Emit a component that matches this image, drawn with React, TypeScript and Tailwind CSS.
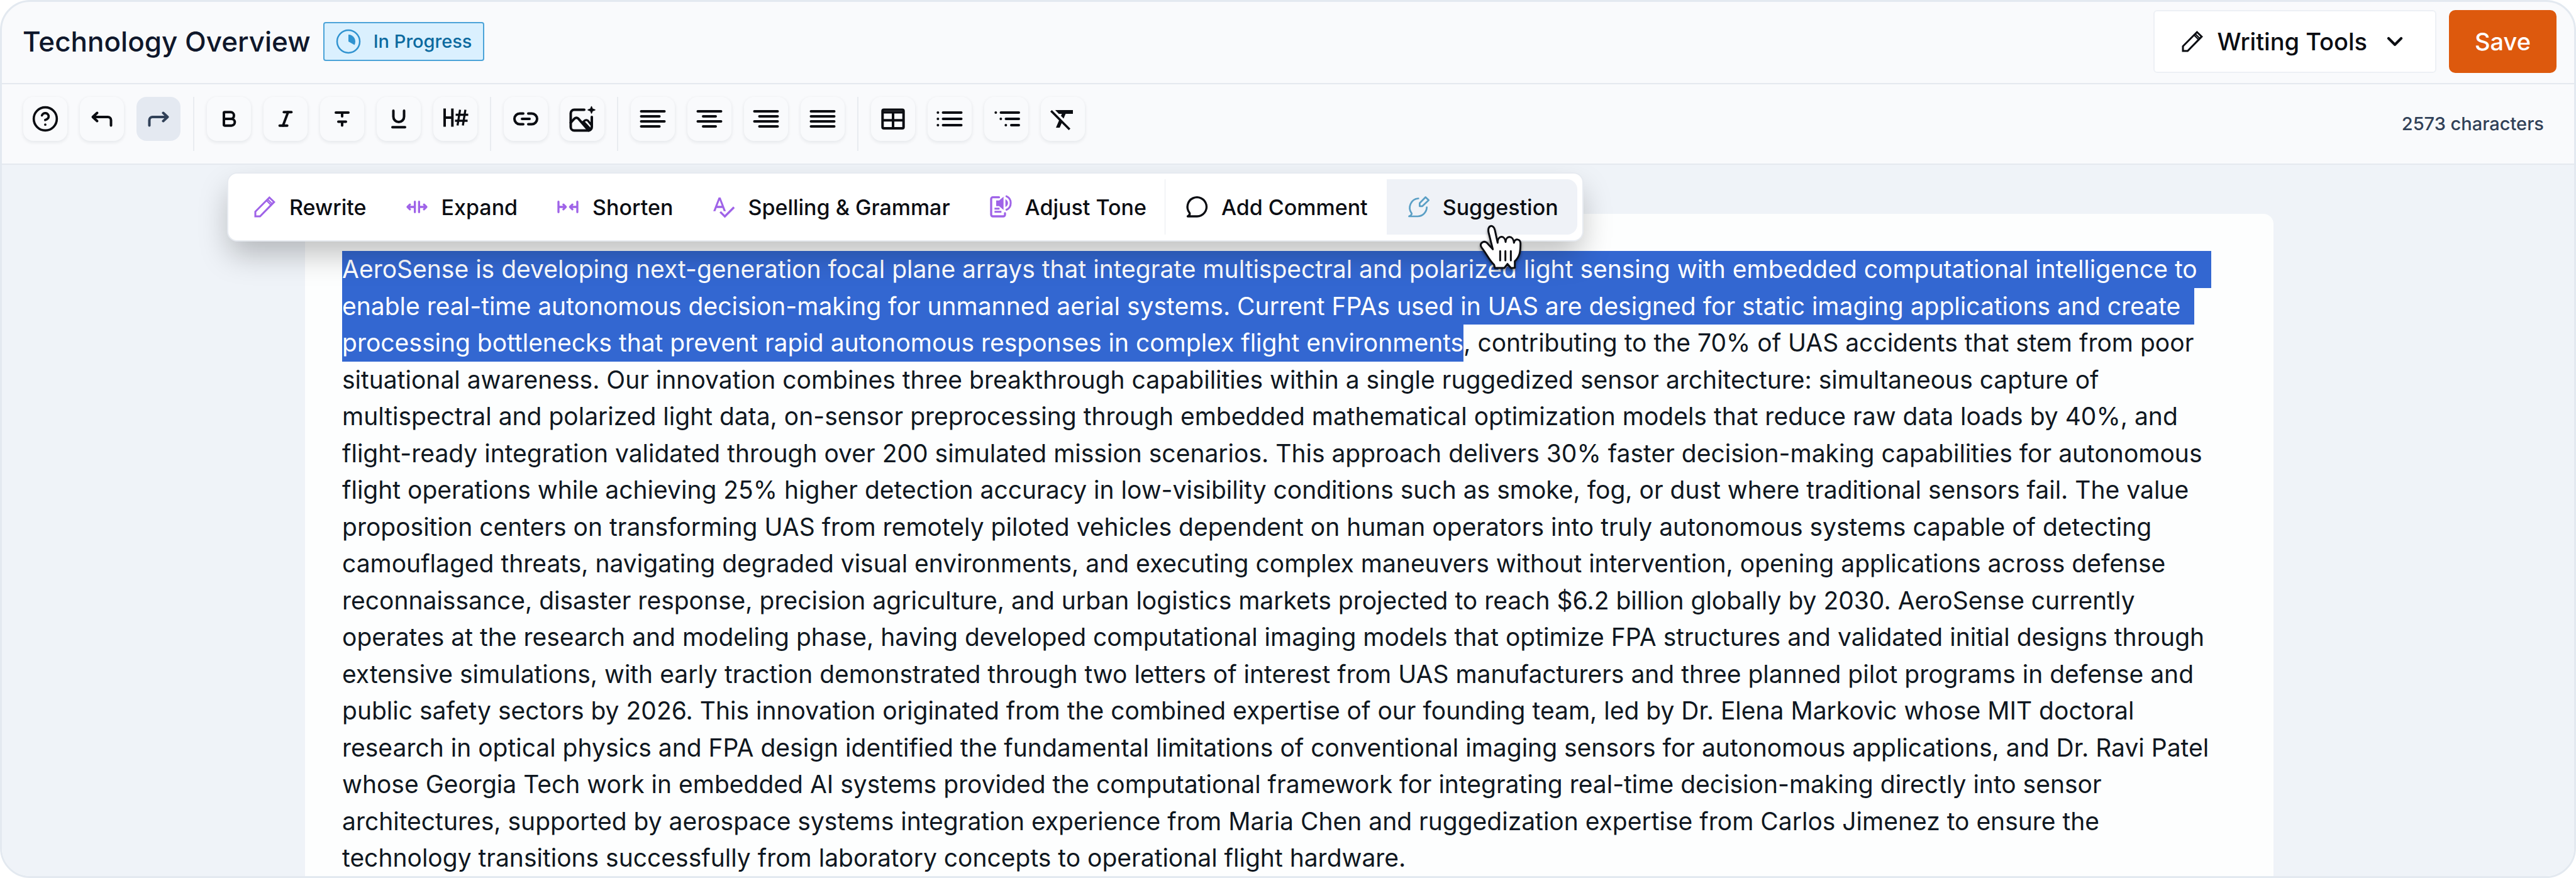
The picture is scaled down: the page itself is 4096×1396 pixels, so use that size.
import type { ReactNode } from 'react';
import { Bold, Italic, CircleQuestionMark, ChevronDown } from 'lucide-react';
import { MdFormatClear, MdSpellcheck } from 'react-icons/md';

interface IconProps {
  children: ReactNode;
  className?: string;
}

// 48px toolbar icon, one unit per pixel
function ToolIcon({ children, className = '' }: IconProps) {
  return (
    <svg
      viewBox="0 0 48 48"
      fill="none"
      stroke="currentColor"
      strokeWidth="4"
      strokeLinecap="round"
      strokeLinejoin="round"
      className={`size-12 ${className}`}
      aria-hidden="true"
    >
      {children}
    </svg>
  );
}

// 40px icon for the menus
function MenuIcon({ children, className = '' }: IconProps) {
  return (
    <svg
      viewBox="0 0 24 24"
      fill="none"
      stroke="currentColor"
      strokeWidth="1.6"
      strokeLinecap="round"
      strokeLinejoin="round"
      className={`size-10 shrink-0 ${className}`}
      aria-hidden="true"
    >
      {children}
    </svg>
  );
}

const PencilIcon = ({ className }: { className?: string }) => (
  <MenuIcon className={className}>
    <path strokeLinejoin="miter" strokeWidth="1.8" d="M3 21v-4.5L16.4 3l4.5 4.3L7.5 21z" />
    <path d="M13.6 5.8l4.5 4.5M15.2 5.2l3.4 3.4" strokeWidth="1.3" />
  </MenuIcon>
);

const toolGroups = [
  [
    { label: 'Help', icon: <CircleQuestionMark className="size-11" strokeWidth={2} /> },
    { label: 'Undo', icon: <ToolIcon><path d="M38.5 34.5V26a5 5 0 0 0-5-5H10M16.5 14.5L9.5 21l7 6.5" /></ToolIcon> },
    { label: 'Redo', active: true, icon: <ToolIcon><path d="M9.5 34.5V26a5 5 0 0 1 5-5H38M31.5 14.5l7 6.5-7 6.5" /></ToolIcon> },
  ],
  [
    { label: 'Bold', icon: <Bold className="size-8" strokeWidth={3} /> },
    { label: 'Italic', icon: <Italic className="size-8" strokeWidth={3} /> },
    { label: 'Strikethrough', icon: <ToolIcon><path d="M14 14h20M24 14v6M18 28.5h12M24 28.5V34.5" /></ToolIcon> },
    { label: 'Underline', icon: <ToolIcon><path d="M15.5 11v9.5a8.5 8.5 0 0 0 17 0V11M14 37.3h20" /></ToolIcon> },
    {
      label: 'Heading',
      icon: (
        <ToolIcon>
          <g strokeLinecap="butt">
            <path d="M7 7.5v29M19.3 7.5v29M7 22h12.3" />
            <path strokeWidth="3.4" d="M31.5 9.5l-4 25M40 9.5l-4 25M24.5 17.5h20M23.5 27h20" />
          </g>
        </ToolIcon>
      ),
    },
  ],
  [
    { label: 'Link', icon: <ToolIcon><path d="M20 15.5h-5.5a8.5 8.5 0 0 0 0 17H20M28 15.5h5.5a8.5 8.5 0 0 1 0 17H28M18 24h12" /></ToolIcon> },
    {
      label: 'Image',
      icon: (
        <ToolIcon>
          <path d="M27 9.5H11A5.5 5.5 0 0 0 5.5 15v22a5.5 5.5 0 0 0 5.5 5.5h22.5A5.5 5.5 0 0 0 39 37V21" />
          <path d="M5.5 30l6-6.5q3-2.5 6 0L34 42.5" />
          <path strokeWidth="3.4" d="M25 29l3-2.5q3-1.5 5 .5l5.5 7M27 30l9.5 10" />
          <path strokeWidth="1.5" fill="currentColor" d="M38.5 4.5l1.5 3.7 4 1.5-4 1.5-1.5 3.8-1.5-3.8-4-1.5 4-1.5z" />
        </ToolIcon>
      ),
    },
  ],
  [
    { label: 'Align left', icon: <ToolIcon><path d="M5.5 12h37M5.5 20h29M5.5 28h37M5.5 36h29" /></ToolIcon> },
    { label: 'Align center', icon: <ToolIcon><path d="M5.5 12h37M14 20h20M5.5 28h37M14 36h20" /></ToolIcon> },
    { label: 'Align right', icon: <ToolIcon><path d="M5.5 12h37M13.5 20h29M5.5 28h37M13.5 36h29" /></ToolIcon> },
    { label: 'Justify', icon: <ToolIcon><path d="M5.5 12h37M5.5 20h37M5.5 28h37M5.5 36h37" /></ToolIcon> },
  ],
  [
    {
      label: 'Table',
      icon: (
        <ToolIcon>
          <rect x="7.3" y="9.5" width="33.4" height="29.5" rx="2" />
          <path strokeLinecap="butt" d="M7 13.5h34M24 14v25M7 26.3h34" />
        </ToolIcon>
      ),
    },
    { label: 'Bulleted list', icon: <ToolIcon><path d="M5.3 14h.1M5.3 24h.1M5.3 34h.1M13.5 14h29M13.5 24h29M13.5 34h29" /></ToolIcon> },
    { label: 'Nested list', icon: <ToolIcon><path d="M7.3 14h.1M15.3 24h.1M23.3 34h.1M15.5 14H44M23.5 24H44M32 34h12" /></ToolIcon> },
    { label: 'Clear formatting', icon: <MdFormatClear className="size-12" /> },
  ],
];

const aiActions = [
  { label: 'Rewrite', icon: <PencilIcon className="text-[#9f63e8]" /> },
  {
    label: 'Expand',
    icon: (
      <MenuIcon className="text-[#9f63e8]">
        <path strokeWidth="2" d="M10 7v10M14 7v10M10 12H3M14 12h7M5.3 9.7L3 12l2.3 2.3M18.7 9.7L21 12l-2.3 2.3" />
      </MenuIcon>
    ),
  },
  {
    label: 'Shorten',
    icon: (
      <MenuIcon className="text-[#9f63e8]">
        <path strokeWidth="2" d="M3 7v10M21 7v10M3 12h7M21 12h-7M7.7 9.7L10 12l-2.3 2.3M16.3 9.7L14 12l2.3 2.3" />
      </MenuIcon>
    ),
  },
  { label: 'Spelling & Grammar', icon: <MdSpellcheck className="size-10 shrink-0 text-[#9f63e8]" /> },
  {
    label: 'Adjust Tone',
    icon: (
      <MenuIcon className="text-[#9f63e8]">
        <path strokeWidth="2" d="M10.5 2.8H4.6A1.6 1.6 0 0 0 3 4.4v15A1.6 1.6 0 0 0 4.6 21h10a1.6 1.6 0 0 0 1.6-1.6V18" />
        <path strokeWidth="1.8" strokeLinecap="butt" d="M6.2 13.6H11M6.2 16.6h6.6" />
        <path stroke="none" fill="currentColor" d="M7.8 5.8h2.8l4.2-3.6v12.6l-4.2-3.6H7.8zM16.6 4.6c3.3 1.6 3.3 5.8 0 7.4z" />
        <path strokeWidth="1.8" d="M17.6 1.9c5.4 2.2 5.4 10.6 0 12.8" />
      </MenuIcon>
    ),
  },
];

const selectedLines = [
  'AeroSense is developing next-generation focal plane arrays that integrate multispectral and polarized light sensing with embedded computational intelligence to',
  'enable real-time autonomous decision-making for unmanned aerial systems. Current FPAs used in UAS are designed for static imaging applications and create',
];

const lines = [
  'situational awareness. Our innovation combines three breakthrough capabilities within a single ruggedized sensor architecture: simultaneous capture of',
  'multispectral and polarized light data, on-sensor preprocessing through embedded mathematical optimization models that reduce raw data loads by 40%, and',
  'flight-ready integration validated through over 200 simulated mission scenarios. This approach delivers 30% faster decision-making capabilities for autonomous',
  'flight operations while achieving 25% higher detection accuracy in low-visibility conditions such as smoke, fog, or dust where traditional sensors fail. The value',
  'proposition centers on transforming UAS from remotely piloted vehicles dependent on human operators into truly autonomous systems capable of detecting',
  'camouflaged threats, navigating degraded visual environments, and executing complex maneuvers without intervention, opening applications across defense',
  'reconnaissance, disaster response, precision agriculture, and urban logistics markets projected to reach $6.2 billion globally by 2030. AeroSense currently',
  'operates at the research and modeling phase, having developed computational imaging models that optimize FPA structures and validated initial designs through',
  'extensive simulations, with early traction demonstrated through two letters of interest from UAS manufacturers and three planned pilot programs in defense and',
  'public safety sectors by 2026. This innovation originated from the combined expertise of our founding team, led by Dr. Elena Markovic whose MIT doctoral',
  'research in optical physics and FPA design identified the fundamental limitations of conventional imaging sensors for autonomous applications, and Dr. Ravi Patel',
  'whose Georgia Tech work in embedded AI systems provided the computational framework for integrating real-time decision-making directly into sensor',
  'architectures, supported by aerospace systems integration experience from Maria Chen and ruggedization expertise from Carlos Jimenez to ensure the',
  'technology transitions successfully from laboratory concepts to operational flight hardware.',
];

function Header() {
  return (
    <header className="flex items-center justify-between border-b-2 border-[#e5e9ef] pt-[13px] pb-4 pl-[33px] pr-7">
      <div className="flex items-center gap-5">
        <h1 className="text-[44px] leading-[60px] font-medium text-slate-900">Technology Overview</h1>
        <span className="flex h-[62px] items-center gap-5 rounded border-2 border-[#4ba3d8] bg-[#daf0fe] px-[18px] text-[29px] font-medium text-[#0c6a9f]">
          <svg viewBox="0 0 40 40" className="size-10 text-[#3093d0]" aria-hidden="true">
            <circle cx="20" cy="20" r="18" fill="none" stroke="currentColor" strokeWidth="2.5" />
            <path d="M20 20V9a11 11 0 0 1 9.6 16.4z" fill="currentColor" />
          </svg>
          In Progress
        </span>
      </div>
      <div className="flex items-center gap-5">
        <button
          type="button"
          className="flex h-[100px] items-center gap-5 rounded-md border-2 border-[#edf0f5] bg-white px-10 text-[38px] font-medium text-[#0b0d12]"
        >
          <PencilIcon />
          Writing Tools
          <ChevronDown className="mx-1 size-10" strokeWidth={2.5} />
        </button>
        <button type="button" className="h-[100px] rounded-[10px] bg-[#dd590d] px-[41px] text-[38px] font-medium text-white">
          Save
        </button>
      </div>
    </header>
  );
}

function Toolbar() {
  return (
    <div className="flex items-center justify-between border-b-2 border-[#e5e9ef] py-5 pl-[34px] pr-12">
      <div className="flex items-start">
        {toolGroups.map((group, i) => (
          <div key={i} className="flex items-start">
            {i > 0 && <span className="mx-5 h-[86px] w-0.5 bg-[#e9ecf0]" />}
            <div className="flex gap-5">
              {group.map((tool) => (
                <button
                  key={tool.label}
                  type="button"
                  aria-label={tool.label}
                  className={`flex size-[70px] items-center justify-center rounded-2xl ${
                    'active' in tool && tool.active
                      ? 'bg-[#e4e9f1] text-slate-700'
                      : 'bg-[#f9fafc] text-[#0b0d12] shadow-[0_2px_5px_1px_rgba(15,23,42,0.07)]'
                  }`}
                >
                  {tool.icon}
                </button>
              ))}
            </div>
          </div>
        ))}
      </div>
      <p className="text-[29px] font-medium text-slate-700">2573 characters</p>
    </div>
  );
}

function SelectionMenu() {
  return (
    <div className="absolute top-3 left-[358px] flex rounded-2xl border-2 border-[#e6eaf0] bg-white px-2 py-[9px] text-[34px] font-medium text-[#0b0d12] shadow-[0_24px_48px_-4px_rgba(0,0,0,0.25)]">
      {aiActions.map((action) => (
        <button key={action.label} type="button" className="flex h-[88px] items-center gap-[19px] px-[30px] whitespace-nowrap">
          {action.icon}
          {action.label}
        </button>
      ))}
      <button
        type="button"
        className="-ml-px flex h-[88px] items-center gap-[19px] border-l border-[#e9ecf0] px-[30px] whitespace-nowrap"
      >
        <MenuIcon>
          <path strokeWidth="2" d="M3.3 21c1.7-.9 2.3-2.2 1.7-3.5A9.1 9.1 0 1 1 12.2 21z" />
        </MenuIcon>
        Add Comment
      </button>
      <div className="relative">
        <button
          type="button"
          className="flex h-[88px] items-center gap-[19px] rounded-r-2xl bg-[#eff2f7] px-[30px] whitespace-nowrap"
        >
          <MenuIcon className="text-[#5a9fc5]">
            <path d="M12.2 3.9a8.9 8.9 0 0 0-6.4 14.3c.4.6-.5 1.6-2.5 2.8h8.2a8.9 8.9 0 0 0 8.7-8.6" />
            <path d="M19 2.7L22 5.6 16 11.3h-2.6V8.4z" />
          </MenuIcon>
          Suggestion
        </button>
        {/* pointer */}
        <svg
          viewBox="510 235 204 216"
          className="pointer-events-none absolute top-[72px] left-[147px] h-[72px] w-[68px] drop-shadow-[0_3px_2px_rgba(0,0,0,0.4)]"
          aria-hidden="true"
        >
          <path
            d="M575 353l-20-80c-8-38 24-40 30-11l13 60c0-36 34-38 38-4 2-32 36-32 40 4 4-22 30-20 31 3 0 40-3 62-27 85v31l-18 2-17-20-15 19h-45l-4-15c-26-26-34-50-60-83-12-20 10-33 25-23z"
            fill="#fff"
            stroke="#0b0d12"
            strokeWidth="9"
            strokeLinejoin="round"
          />
          <path d="M610 362v44M635 362v44M661 362v44" stroke="#0b0d12" strokeWidth="9" strokeLinecap="round" />
        </svg>
      </div>
    </div>
  );
}

function Document() {
  return (
    <article className="mx-auto mt-[78px] w-full max-w-[3130px] rounded-t-2xl bg-[#fdfefe] px-[59px] pt-[59px] pb-6">
      <p className="text-[39px] leading-normal whitespace-pre text-[#0f1720]">
        {selectedLines.map((line) => (
          <span key={line} className="block">
            <span className="inline-block bg-[#3367d1] text-white">{`${line}  `}</span>
          </span>
        ))}
        <span className="block">
          <span className="inline-block bg-[#3367d1] text-white">
            processing bottlenecks that prevent rapid autonomous responses in complex flight environments
          </span>
          , contributing to the 70% of UAS accidents that stem from poor
        </span>
        {lines.map((line) => (
          <span key={line} className="block">
            {line}
          </span>
        ))}
      </p>
    </article>
  );
}

export default function App() {
  return (
    <div className="h-screen bg-white font-[Inter,sans-serif]">
      <div className="flex h-full flex-col overflow-hidden rounded-[48px] border-[3px] border-[#e3e9f0] bg-[#f9fafc]">
        <Header />
        <Toolbar />
        <main className="relative min-h-0 flex-1 overflow-hidden bg-[#eff3f8] pl-1">
          <Document />
          <SelectionMenu />
        </main>
      </div>
    </div>
  );
}
